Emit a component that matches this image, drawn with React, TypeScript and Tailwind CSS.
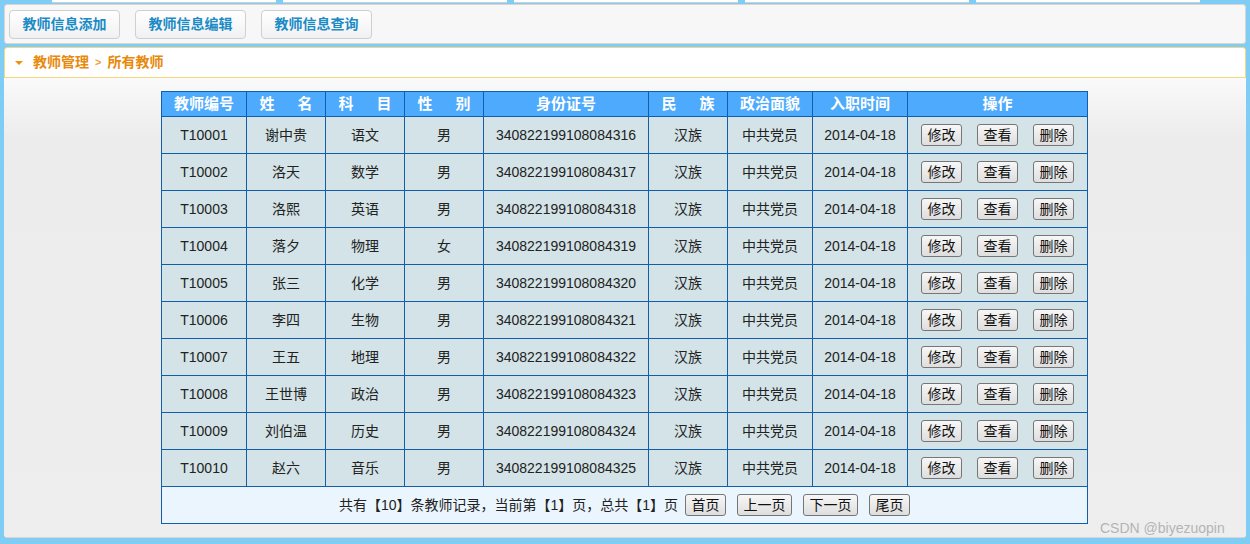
import React from "react";

const teachers = [
  ["T10001", "谢中贵", "语文", "男", "340822199108084316"],
  ["T10002", "洛天", "数学", "男", "340822199108084317"],
  ["T10003", "洛熙", "英语", "男", "340822199108084318"],
  ["T10004", "落夕", "物理", "女", "340822199108084319"],
  ["T10005", "张三", "化学", "男", "340822199108084320"],
  ["T10006", "李四", "生物", "男", "340822199108084321"],
  ["T10007", "王五", "地理", "男", "340822199108084322"],
  ["T10008", "王世博", "政治", "男", "340822199108084323"],
  ["T10009", "刘伯温", "历史", "男", "340822199108084324"],
  ["T10010", "赵六", "音乐", "男", "340822199108084325"],
];

const font = "font-['Liberation_Sans','Noto_Sans_CJK_SC',sans-serif]";

function GrayBtn({ label, w }: { label: string; w: string }) {
  return (
    <button
      className={`${w} h-[22px] rounded-[3px] border border-[#767676] bg-[linear-gradient(#f7f7f7,#dedede)] text-[14px] leading-[20px] text-[#111]`}
    >
      {label}
    </button>
  );
}

function ToolBtn({ label }: { label: string }) {
  return (
    <button className="w-[111px] h-[29px] rounded-[4px] border border-[#cfcfcf] bg-[linear-gradient(#ffffff,#f1f1f1)] text-[14px] font-bold text-[#1b8bc6]">
      {label}
    </button>
  );
}

function Spread({ a, b }: { a: string; b: string }) {
  return (
    <div className="flex justify-center gap-[23px]">
      <span>{a}</span>
      <span>{b}</span>
    </div>
  );
}

export default function App() {
  return (
    <div className={`relative w-[1250px] h-[544px] bg-[#7fcdf4] px-[4px] ${font} overflow-hidden`}>
      {/* 顶部标签条 */}
      <div className="flex h-[4px] pl-[48px] gap-[7px]">
        {[0, 1, 2, 3, 4].map((i) => (
          <div key={i} className="w-[224px] h-[3px] bg-white border-b border-[#cfcfcf]" />
        ))}
      </div>

      {/* 工具栏 */}
      <div className="h-[40px] rounded-[3px] border border-[#d6d6d6] bg-[#f7f7f7] flex items-start pt-[5px] pl-[4px] gap-[15px]">
        <ToolBtn label="教师信息添加" />
        <ToolBtn label="教师信息编辑" />
        <ToolBtn label="教师信息查询" />
      </div>

      <div className="mt-[3px] h-[491px] rounded-[3px] border-b border-[#d6d6d6] flex flex-col overflow-hidden">
        {/* 面包屑 */}
        <div className="h-[31px] bg-white border border-[#f6d77c] rounded-t-[3px] flex items-center pl-[10px]">
          <span className="w-0 h-0 border-l-[4px] border-r-[4px] border-t-[4px] border-l-transparent border-r-transparent border-t-[#f0900a]" />
          <span className="ml-[10px] text-[14px] font-bold text-[#e8890c]">教师管理</span>
          <span className="mx-[6px] text-[11px] font-bold text-[#f0a040]">&gt;</span>
          <span className="text-[14px] font-bold text-[#e8890c]">所有教师</span>
        </div>

        {/* 内容 */}
        <div className="flex-1 bg-[linear-gradient(#fafafa,#ececec_60px,#eeeeee)] pt-[13px] pr-[1px] flex justify-center">
          <table className="border-collapse w-[927px] h-[432px] self-start text-center text-[14px] text-[#222]">
            <thead>
              <tr className="h-[25px] bg-[#4eaafc] text-white text-[15px] font-bold">
                <th className="border border-[#105eac] w-[85px] font-bold">教师编号</th>
                <th className="border border-[#105eac] w-[79px] font-bold"><Spread a="姓" b="名" /></th>
                <th className="border border-[#105eac] w-[79px] font-bold"><Spread a="科" b="目" /></th>
                <th className="border border-[#105eac] w-[79px] font-bold"><Spread a="性" b="别" /></th>
                <th className="border border-[#105eac] w-[165px] font-bold">身份证号</th>
                <th className="border border-[#105eac] w-[79px] font-bold"><Spread a="民" b="族" /></th>
                <th className="border border-[#105eac] w-[85px] font-bold">政治面貌</th>
                <th className="border border-[#105eac] w-[95px] font-bold">入职时间</th>
                <th className="border border-[#105eac] font-bold">操作</th>
              </tr>
            </thead>
            <tbody>
              {teachers.map((t) => (
                <tr key={t[0]} className="h-[37px] bg-[#d3e3e7]">
                  <td className="border border-[#105eac]">{t[0]}</td>
                  <td className="border border-[#105eac]">{t[1]}</td>
                  <td className="border border-[#105eac]">{t[2]}</td>
                  <td className="border border-[#105eac]">{t[3]}</td>
                  <td className="border border-[#105eac]">{t[4]}</td>
                  <td className="border border-[#105eac]">汉族</td>
                  <td className="border border-[#105eac]">中共党员</td>
                  <td className="border border-[#105eac]">2014-04-18</td>
                  <td className="border border-[#105eac]">
                    <div className="flex justify-center gap-[15px]">
                      <GrayBtn label="修改" w="w-[41px]" />
                      <GrayBtn label="查看" w="w-[41px]" />
                      <GrayBtn label="删除" w="w-[41px]" />
                    </div>
                  </td>
                </tr>
              ))}
              <tr className="h-[37px] bg-[#eaf5fe]">
                <td colSpan={9} className="border border-[#105eac]">
                  <div className="flex justify-center items-center gap-[11px]">
                    <span className="mr-[-4px]">共有【10】条教师记录，当前第【1】页，总共【1】页</span>
                    <GrayBtn label="首页" w="w-[41px]" />
                    <GrayBtn label="上一页" w="w-[55px]" />
                    <GrayBtn label="下一页" w="w-[55px]" />
                    <GrayBtn label="尾页" w="w-[41px]" />
                  </div>
                </td>
              </tr>
            </tbody>
          </table>
        </div>
      </div>

      <span className="absolute left-[1100px] top-[518px] text-[14px] text-[#b4b4b4]">CSDN @biyezuopin</span>
    </div>
  );
}
